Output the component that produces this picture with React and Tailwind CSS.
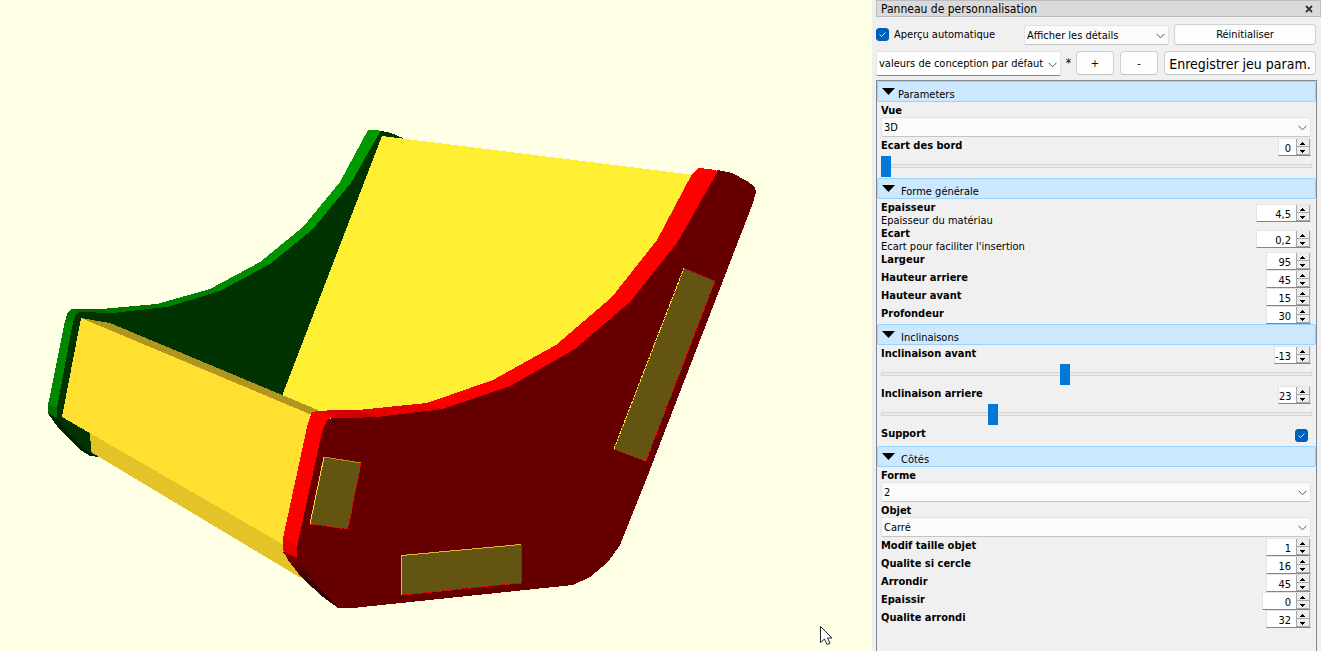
import { useState } from "react";

const TEXT = "font-['DejaVu_Sans_Condensed','DejaVu_Sans',sans-serif]";

function Scene() {
  return (
    <svg
      viewBox="0 0 872 651"
      className="block h-auto w-full"
      shapeRendering="crispEdges"
      role="img"
      aria-label="3D"
    >
      <defs>
        <linearGradient id="bevel" x1="283" y1="550" x2="338" y2="608" gradientUnits="userSpaceOnUse">
          <stop offset="0" stopColor="#b80000" />
          <stop offset="0.12" stopColor="#7a0000" />
          <stop offset="0.4" stopColor="#420000" />
          <stop offset="1" stopColor="#250000" />
        </linearGradient>
      </defs>

      {/* left side plate */}
      <polygon
        fill="#003300"
        points="379,131 388,132 396,135 403,138 403,160 300,400 110,458 100,457 90,456 82,451 73,443 60,430 49,415 57,408 65,322 80,310 112,310 167,305 220,289 270,262 312,228 351,181"
      />
      <polygon fill="#009900" points="368,130 379,130 380,132 351,183 340,182" />
      <polygon fill="#009800" points="340,182 351,183 312,230 303,227" />
      <polygon fill="#009300" points="303,227 312,230 270,264 260,262" />
      <polygon fill="#008a00" points="260,262 270,264 220,291 210,289" />
      <polygon fill="#007f00" points="210,289 220,291 167,307 157,304" />
      <polygon fill="#007500" points="157,304 167,307 112,313 101,309" />
      <polygon fill="#006600" points="71,309 101,309 112,313 80,312" />
      <polygon fill="#007600" points="71,309 80,312 76,314 73,322 65,322 67,314" />
      <polygon fill="#008800" points="65,321 73,322 57,408 48,405" />
      <polygon fill="#006e00" points="48,405 57,408 57,418 48,413" />
      <polygon fill="#002400" points="48,413 57,418 72,436 86,450 100,457 90,456 73,443 60,430" />

      {/* seat and front boards */}
      <polygon fill="#ffef33" points="382,136 694,175 694,260 560,380 400,430 318,413 282,396" />
      <polygon fill="#b0961f" points="81,318 110,323 318,410 318,418 309,416" />
      <polygon fill="#e3c428" points="90,430 283,540 302,560 301,578 91,452" />
      <polygon fill="#ffdf2f" points="81,318 312,415 307,427 284,545 62,417" />

      {/* right side plate */}
      <polygon
        fill="#660000"
        points="717,170 732,173 747,181 755,187 756,192 753,203 646,480 640,495 620,545 608,562 590,577 573,585 353,608 338,608 323,597 302,578 283,552 297,547 322,432 327,420 332,418 377,416 443,409 510,386 575,349 630,302 677,243"
      />
      <polygon fill="url(#bevel)" points="283,549 297,558 304,569 320,589 338,607 323,597 302,578 288,560" />
      <polygon fill="#ff0000" points="692,174 698,168 710,169 718,171 677,243 657,240" />
      <polygon fill="#ff0000" points="657,240 677,243 630,302 612,297" />
      <polygon fill="#ff0000" points="612,297 630,302 575,349 556,345" />
      <polygon fill="#ff0000" points="556,345 575,349 510,386 493,380" />
      <polygon fill="#fb0000" points="493,380 510,386 443,409 427,403" />
      <polygon fill="#e60000" points="427,403 443,409 377,417 358,410" />
      <polygon fill="#cc0000" points="338,410 358,410 377,417 350,418" />
      <polygon fill="#dd0000" points="315,411 338,410 352,418 330,418" />
      <polygon fill="#ff0000" points="312,412 318,411 334,417 327,420 322,432 297,547 283,538 307,427" />
      <polygon fill="#e60000" points="283,538 297,547 297,558 283,551" />

      {/* tenons */}
      <polygon fill="#635412" points="324,457 361,463 348,529 310,524" />
      <path d="M361 463 348 529 310 524" fill="none" stroke="#f00000" strokeDasharray="4 2" />
      <path d="M310 524 324 457" fill="none" stroke="#ffdf2f" />
      <path d="M324 457 361 463" fill="none" stroke="#b0961f" />

      <polygon fill="#635412" points="401,555 521,544 521,583 401,595" />
      <path d="M401.5 595 401.5 555.5 521 544.5" fill="none" stroke="#e3b928" />
      <path d="M521.5 545 521.5 583" fill="none" stroke="#e60000" />
      <path d="M521 583 402 595" fill="none" stroke="#e60000" strokeDasharray="9 2" />

      <polygon fill="#635412" points="684,268 715,281 646,461 614,449" />
      <path d="M684 268 715 281" fill="none" stroke="#8a1500" />
      <path d="M715 281 646 461" fill="none" stroke="#f00000" strokeDasharray="3 1" />
      <path d="M614 449 684 268" fill="none" stroke="#ffef33" strokeDasharray="3 1" />
      <path d="M614 449 646 461" fill="none" stroke="#a03c08" />

      {/* mouse pointer */}
      <path
        d="M820.5 626.5v16l4-3.5 2.5 5.5 3-1.3-2.5-5.2h4.5z"
        fill="#fff"
        stroke="#222233"
        shapeRendering="auto"
      />
    </svg>
  );
}

function Select({ label, value, className, boxClassName }) {
  return (
    <div className={`relative flex items-center ${className}`}>
      <select
        aria-label={label}
        defaultValue={value}
        className={`h-full w-full appearance-none rounded-xs border border-[#e3e3e3] pt-0.5 pl-0.5 outline-none ${boxClassName}`}
      >
        <option>{value}</option>
      </select>
      <svg
        viewBox="0 0 9 6"
        className="pointer-events-none absolute right-1 mt-0.5 h-1.5 w-[9px]"
        aria-hidden="true"
      >
        <path d="M0.5 0.8 4.5 4.8 8.5 0.8" fill="none" stroke="#555" />
      </svg>
    </div>
  );
}

function Check({ id, label }) {
  return (
    <span className="relative flex size-[13px] shrink-0">
      <input
        id={id}
        type="checkbox"
        defaultChecked
        aria-label={label}
        className="peer size-[13px] appearance-none rounded-[3px] border border-[#005fb8] bg-white checked:bg-[#005fb8]"
      />
      <svg viewBox="0 0 13 13" className="pointer-events-none absolute inset-0 hidden peer-checked:block" aria-hidden="true">
        <path d="M3.5 6.5 5.5 8.5 9.5 4.5" fill="none" stroke="#d6e6f5" />
      </svg>
    </span>
  );
}

function PushButton({ className, children }) {
  return (
    <button
      type="button"
      className={`flex shrink-0 items-center justify-center rounded-sm border border-[#d0d0d0] border-b-[#c0c0c0] bg-[#fdfdfd] pt-0.5 whitespace-nowrap ${className}`}
    >
      {children}
    </button>
  );
}

function Arrow({ up, label }) {
  return (
    <button
      type="button"
      aria-label={label}
      className="flex h-2 w-[14px] items-end border-x border-b border-[#a9a9a9] bg-[#ededed] pb-px pl-[3px]"
    >
      <svg viewBox="0 0 5 3" className="h-[3px] w-[5px]" shapeRendering="crispEdges" aria-hidden="true">
        <path d={up ? "M0 3V2H1V1H2V0H3V1H4V2H5V3z" : "M0 0V1H1V2H2V3H3V2H4V1H5V0z"} fill="#000" />
      </svg>
    </button>
  );
}

function Spin({ id, value, width }) {
  return (
    <div className={`flex h-[18px] shrink-0 border border-[#e3e3e3] border-b-[#858585] bg-white ${width}`}>
      <input
        id={id}
        type="text"
        inputMode="decimal"
        defaultValue={value}
        className="min-w-0 flex-1 bg-transparent pt-0.5 pr-[5px] text-right leading-[13px] outline-none"
      />
      <div className="flex flex-col">
        <Arrow up label="+" />
        <Arrow label="-" />
      </div>
    </div>
  );
}

function NumberRow({ id, label, note, value, width }) {
  return (
    <div className={`flex justify-between pr-px ${note ? "h-[26px] items-center" : "h-[18px] items-start"}`}>
      <label htmlFor={id} className={note ? "pt-0.5 leading-[13px]" : "pt-px leading-[13px]"}>
        <span className="block font-bold">{label}</span>
        {note && <span className="block">{note}</span>}
      </label>
      <Spin id={id} value={value} width={width} />
    </div>
  );
}

function SliderRow({ id, label, value, width, min, max }) {
  return (
    <div>
      <NumberRow id={id} label={label} value={value} width={width} />
      <div className="flex h-[22px] items-start">
        <input
          type="range"
          aria-label={label}
          min={min}
          max={max}
          defaultValue={value}
          className="h-5 w-full appearance-none bg-transparent [&::-webkit-slider-runnable-track]:h-1 [&::-webkit-slider-runnable-track]:border [&::-webkit-slider-runnable-track]:border-[#d6d6d6] [&::-webkit-slider-runnable-track]:bg-[#e7eaea] [&::-webkit-slider-thumb]:-mx-px [&::-webkit-slider-thumb]:mt-[-9px] [&::-webkit-slider-thumb]:h-[21px] [&::-webkit-slider-thumb]:w-[10px] [&::-webkit-slider-thumb]:appearance-none [&::-webkit-slider-thumb]:bg-[#0078d7]"
        />
      </div>
    </div>
  );
}

function SelectRow({ label, value }) {
  return (
    <div className="pr-px pb-px">
      <div className="h-[14px] pt-px leading-[13px] font-bold">{label}</div>
      <Select label={label} value={value} className="h-5" boxClassName="border-b-[#c4c4c4] bg-[#fbfbfb]" />
    </div>
  );
}

function Section({ title, gap, children }) {
  const [open, setOpen] = useState(true);
  return (
    <section>
      <button
        type="button"
        aria-expanded={open}
        onClick={() => setOpen(!open)}
        className={`flex h-[21px] w-full items-start rounded-xs border border-[#99d1ff] bg-[#cce8ff] pl-1 ${gap}`}
      >
        <svg viewBox="0 0 13 7" className="mt-1.5 h-[7px] w-[13px]" aria-hidden="true">
          <path d="M0 0H13L6.5 7z" fill="#000" />
        </svg>
        <span className="pt-[5px] leading-[15px]">{title}</span>
      </button>
      {open && <div className="px-1 pt-px">{children}</div>}
    </section>
  );
}

export default function App() {
  return (
    <div className={`flex min-h-screen bg-[#ffffe5] text-[11px] text-black ${TEXT}`}>
      <main className="min-w-0 flex-1">
        <Scene />
      </main>

      <aside className="flex w-[449px] shrink-0 flex-col bg-[#f0f0f0] pl-1">
        <header className="flex h-[17px] items-center justify-between border border-[#bcbcbc] bg-[#dadada] pr-[7px] pl-1">
          <h1 className="text-xs">Panneau de personnalisation</h1>
          <button type="button" aria-label="Fermer">
            <svg viewBox="0 0 8 8" className="size-2" aria-hidden="true">
              <path d="M1 1 7 7M7 1 1 7" stroke="#333" strokeWidth="1.8" />
            </svg>
          </button>
        </header>

        <div className="flex min-h-0 flex-1 flex-col pt-[7px] pr-1">
          <div className="flex h-[21px] items-center pr-px">
            <Check id="auto" />
            <label htmlFor="auto" className="pt-0.5 pl-[5px]">
              Aperçu automatique
            </label>
            <Select
              label="Détails"
              value="Afficher les détails"
              className="mr-[5px] ml-auto h-5 w-[145px]"
              boxClassName="border-b-[#c4c4c4] bg-[#fbfbfb]"
            />
            <PushButton className="h-[21px] w-[142px]">Réinitialiser</PushButton>
          </div>

          <div className="mt-1.5 flex h-[25px] items-start pr-px">
            <Select
              label="Jeu de paramètres"
              value="valeurs de conception par défaut"
              className="h-[25px] w-[185px]"
              boxClassName="border-b-[#858585] bg-white"
            />
            <span className="flex-1 pt-1 text-center text-xs">*</span>
            <PushButton className="h-6 w-[38px]">+</PushButton>
            <PushButton className="ml-1.5 h-6 w-[38px]">-</PushButton>
            <PushButton className="ml-1.5 h-6 w-[152px] text-sm">Enregistrer jeu param.</PushButton>
          </div>

          <div className="mt-1 flex-1 border-x border-t border-[#828790]">
            <Section title="Parameters" gap="gap-[3px]">
              <SelectRow label="Vue" value="3D" />
              <SliderRow id="bord" label="Ecart des bord" value="0" min="0" max="50" width="w-[33px]" />
            </Section>

            <Section title="Forme générale" gap="gap-1.5">
              <NumberRow id="epaisseur" label="Epaisseur" note="Epaisseur du matériau" value="4,5" width="w-[55px]" />
              <NumberRow id="ecart" label="Ecart" note="Ecart pour faciliter l'insertion" value="0,2" width="w-[55px]" />
              <NumberRow id="largeur" label="Largeur" value="95" width="w-[45px]" />
              <NumberRow id="harriere" label="Hauteur arriere" value="45" width="w-[45px]" />
              <NumberRow id="havant" label="Hauteur avant" value="15" width="w-[45px]" />
              <NumberRow id="profondeur" label="Profondeur" value="30" width="w-[45px]" />
            </Section>

            <Section title="Inclinaisons" gap="gap-1.5">
              <SliderRow id="iavant" label="Inclinaison avant" value="-13" min="-90" max="90" width="w-[37px]" />
              <SliderRow id="iarriere" label="Inclinaison arriere" value="23" min="0" max="90" width="w-[33px]" />
              <div className="flex h-5 items-start justify-between pr-1">
                <label htmlFor="support" className="pt-px leading-[13px] font-bold">
                  Support
                </label>
                <div className="pt-[3px]">
                  <Check id="support" />
                </div>
              </div>
            </Section>

            <Section title="Côtés" gap="gap-1.5">
              <SelectRow label="Forme" value="2" />
              <SelectRow label="Objet" value="Carré" />
              <NumberRow id="modif" label="Modif taille objet" value="1" width="w-[45px]" />
              <NumberRow id="cercle" label="Qualite si cercle" value="16" width="w-[45px]" />
              <NumberRow id="arrondir" label="Arrondir" value="45" width="w-[45px]" />
              <NumberRow id="epaissir" label="Epaissir" value="0" width="w-[49px]" />
              <NumberRow id="arrondi" label="Qualite arrondi" value="32" width="w-[45px]" />
            </Section>
          </div>
        </div>
      </aside>
    </div>
  );
}
